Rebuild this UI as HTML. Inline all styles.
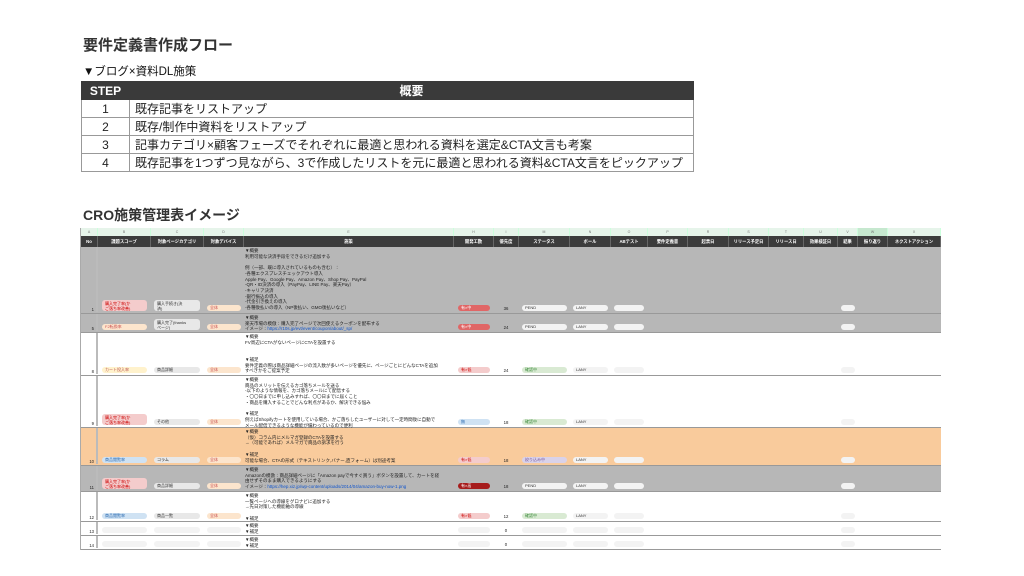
<!DOCTYPE html>
<html><head><meta charset="utf-8"><style>
*{margin:0;padding:0;box-sizing:border-box}
body{width:1024px;height:576px;background:#fff;position:relative;overflow:hidden;font-family:"Liberation Sans","Noto Sans CJK JP",sans-serif;color:#222}
.a{position:absolute}
h1{position:absolute;left:83px;top:34px;font-size:15px;font-weight:bold;color:#333}
.sub{left:83px;top:63px;font-size:11.5px;color:#111}
table.st{position:absolute;left:81px;top:81px;width:613px;border-collapse:collapse;font-size:12px}
table.st td,table.st th{border:1px solid #999;height:18px;line-height:16px}
table.st th{background:#3a3a3a;color:#fff;font-weight:bold;border-color:#3a3a3a}
table.st td:first-child{text-align:center;width:48px}
table.st td:last-child{padding-left:5px}
.cro{left:83px;top:205px;font-size:14px;font-weight:bold;color:#333}
.sheet{left:80px;top:228px;width:860px;height:322px;border-left:1px solid #aaa}
.ch{position:absolute;top:0;height:8px;background:#e6f4ea;font-size:3.5px;color:#777;text-align:center;line-height:8px;border-right:1px solid #cfd;}
.hd{position:absolute;top:8px;height:11px;background:#3c3c3c;color:#fff;font-size:4.3px;font-weight:bold;text-align:center;line-height:11px;border-right:1px solid #666}
.row{position:absolute;left:0;width:860px;border-bottom:1px solid #999}
.g{background:#b7b7b7}.o{background:#f9cb9c}.w{background:#fff}
.num{position:absolute;left:0;width:17px;bottom:1px;font-size:4.2px;text-align:right;padding-right:2px;border-right:2px solid #bbb;top:0;display:flex;align-items:flex-end;justify-content:flex-end}
.t{position:absolute;left:164px;top:1px;font-size:4.5px;line-height:5.7px;width:210px;white-space:nowrap}
.p{position:absolute;height:6px;border-radius:3px;font-size:4px;line-height:6px;padding-left:3px;white-space:nowrap;overflow:hidden}
.p2{height:11px;line-height:5px;border-radius:3px;padding-top:0.5px}
.pk{background:#f4cccc;color:#c00}.gr{background:#e8e8e8;color:#333}.or{background:#fce5cd;color:#c55}
.rd{background:#e06666;color:#fff}.dr{background:#a61c1c;color:#fff}.lg{background:#d9ead3;color:#3a8a3a}.bl{background:#cfe2f3;color:#2a6ab0}
.pu{background:#d9d2e9;color:#7a5aa0}.ye{background:#fff2cc;color:#b55}.ws{background:#f3f3f3;color:#333}
.nm{position:absolute;font-size:4.3px;width:20px;text-align:center}
a{color:#1155cc}
.vl{position:absolute;top:19px;bottom:0;width:0;border-left:1px dashed #ddd}
</style></head><body>
<h1>要件定義書作成フロー</h1>
<div class="a sub">▼ブログ×資料DL施策</div>
<table class="st">
<tr><th style="width:48px">STEP</th><th>概要</th></tr>
<tr><td>1</td><td>既存記事をリストアップ</td></tr>
<tr><td>2</td><td>既存/制作中資料をリストアップ</td></tr>
<tr><td>3</td><td>記事カテゴリ×顧客フェーズでそれぞれに最適と思われる資料を選定&amp;CTA文言も考案</td></tr>
<tr><td>4</td><td>既存記事を1つずつ見ながら、3で作成したリストを元に最適と思われる資料&amp;CTA文言をピックアップ</td></tr>
</table>
<div class="a cro">CRO施策管理表イメージ</div>

<div class="a sheet">
<div class="ch" style="left:0;width:17px">A</div><div class="ch" style="left:17px;width:53px">B</div><div class="ch" style="left:70px;width:53px">C</div><div class="ch" style="left:123px;width:40px">D</div><div class="ch" style="left:163px;width:210px">E</div><div class="ch" style="left:373px;width:40px">H</div><div class="ch" style="left:413px;width:25px">I</div><div class="ch" style="left:438px;width:51px">M</div><div class="ch" style="left:489px;width:41px">N</div><div class="ch" style="left:530px;width:37px">O</div><div class="ch" style="left:567px;width:40px">P</div><div class="ch" style="left:607px;width:41px">R</div><div class="ch" style="left:648px;width:40px">S</div><div class="ch" style="left:688px;width:35px">T</div><div class="ch" style="left:723px;width:34px">U</div><div class="ch" style="left:757px;width:20px">V</div><div class="ch" style="left:777px;width:30px;background:#c6e8cf">W</div><div class="ch" style="left:807px;width:53px">X</div>
<div class="hd" style="left:0;width:17px">No</div><div class="hd" style="left:17px;width:53px">課題スコープ</div><div class="hd" style="left:70px;width:53px">対象ページカテゴリ</div><div class="hd" style="left:123px;width:40px">対象デバイス</div><div class="hd" style="left:163px;width:210px">施策</div><div class="hd" style="left:373px;width:40px">開発工数</div><div class="hd" style="left:413px;width:25px">優先度</div><div class="hd" style="left:438px;width:51px">ステータス</div><div class="hd" style="left:489px;width:41px">ボール</div><div class="hd" style="left:530px;width:37px">ABテスト</div><div class="hd" style="left:567px;width:40px">要件定義書</div><div class="hd" style="left:607px;width:41px">起票日</div><div class="hd" style="left:648px;width:40px">リリース予定日</div><div class="hd" style="left:688px;width:35px">リリース日</div><div class="hd" style="left:723px;width:34px">効果検証日</div><div class="hd" style="left:757px;width:20px">結果</div><div class="hd" style="left:777px;width:30px">振り返り</div><div class="hd" style="left:807px;width:53px">ネクストアクション</div>

<!-- row 1 -->
<div class="row g" style="top:19px;height:67px"><div class="num">1</div>
<div class="t">▼概要<br>利用可能な決済手段をできるだけ追加する<br><br>例（一部、既に導入されているものも含む）：<br>-各種エクスプレスチェックアウト導入<br>Apple Pay、Google Pay、Amazon Pay、Shop Pay、PayPal<br>-QR・ID決済の導入（PayPay、LINE Pay、楽天Pay）<br>-キャリア決済<br>-銀行振込の導入<br>-代金引き換えの導入<br>-各種後払いの導入（NP後払い、GMO後払いなど）</div>
<div class="p p2 pk" style="left:21px;bottom:2px;width:45px">購入完了率(か<br>ご落ち率改善)</div><div class="p p2 gr" style="left:73px;bottom:2px;width:46px">購入手続き(決<br>済)</div><div class="p or" style="left:126px;bottom:2px;width:34px">全体</div>
<div class="p rd" style="left:377px;bottom:2px;width:32px">有×中</div><div class="nm" style="left:415px;bottom:2px">36</div><div class="p ws" style="left:441px;bottom:2px;width:45px">PEND</div><div class="p ws" style="left:492px;bottom:2px;width:35px">LANY</div><div class="p ws" style="left:533px;bottom:2px;width:30px"></div><div class="p ws" style="left:760px;bottom:2px;width:14px"></div></div>
<!-- row 5 -->
<div class="row g" style="top:86px;height:19px"><div class="num">5</div>
<div class="t">▼概要<br>楽天市場の模倣：購入完了ページで次回使えるクーポンを配布する<br>イメージ：<a>https://r10s.jp/evt/event/coupon/about/_sp/</a></div>
<div class="p or" style="left:21px;bottom:2px;width:45px">F2転換率</div><div class="p p2 gr" style="left:73px;bottom:2px;width:46px">購入完了(thanks<br>ページ)</div><div class="p or" style="left:126px;bottom:2px;width:34px">全体</div>
<div class="p rd" style="left:377px;bottom:2px;width:32px">有×中</div><div class="nm" style="left:415px;bottom:2px">24</div><div class="p ws" style="left:441px;bottom:2px;width:45px">PEND</div><div class="p ws" style="left:492px;bottom:2px;width:35px">LANY</div><div class="p ws" style="left:533px;bottom:2px;width:30px"></div><div class="p ws" style="left:760px;bottom:2px;width:14px"></div></div>
<!-- row 8 -->
<div class="row w" style="top:105px;height:43px"><div class="num">8</div>
<div class="t">▼概要<br>FV周辺にCTAがないページにCTAを設置する<br><br><br>▼補足<br>要件定義の際は商品詳細ページの流入数が多いページを優先に、ページごとにどんなCTAを追加<br>すべきかをご提案予定</div>
<div class="p ye" style="left:21px;bottom:2px;width:45px">カート投入率</div><div class="p gr" style="left:73px;bottom:2px;width:46px">商品詳細</div><div class="p or" style="left:126px;bottom:2px;width:34px">全体</div>
<div class="p pk" style="left:377px;bottom:2px;width:32px">有×低</div><div class="nm" style="left:415px;bottom:2px">24</div><div class="p lg" style="left:441px;bottom:2px;width:45px">確認中</div><div class="p ws" style="left:492px;bottom:2px;width:35px">LANY</div><div class="p ws" style="left:533px;bottom:2px;width:30px"></div><div class="p ws" style="left:760px;bottom:2px;width:14px"></div></div>
<!-- row 9 -->
<div class="row w" style="top:148px;height:52px"><div class="num">9</div>
<div class="t">▼概要<br>商品のメリットを伝えるカゴ落ちメールを送る<br>-以下のような情報を、カゴ落ちメールにて配信する<br>・〇〇日までに申し込みすれば、〇〇日までに届くこと<br>・商品を購入することでどんな利点があるか、解決できる悩み<br><br>▼補足<br>例えばShopifyカートを使用している場合、かご落ちしたユーザーに対して一定時間後に自動で<br>メール配信できるような機能が備わっているので便利</div>
<div class="p p2 pk" style="left:21px;bottom:2px;width:45px">購入完了率(か<br>ご落ち率改善)</div><div class="p gr" style="left:73px;bottom:2px;width:46px">その他</div><div class="p or" style="left:126px;bottom:2px;width:34px">全体</div>
<div class="p bl" style="left:377px;bottom:2px;width:32px">無</div><div class="nm" style="left:415px;bottom:2px">18</div><div class="p lg" style="left:441px;bottom:2px;width:45px">確認中</div><div class="p ws" style="left:492px;bottom:2px;width:35px">LANY</div><div class="p ws" style="left:533px;bottom:2px;width:30px"></div><div class="p ws" style="left:760px;bottom:2px;width:14px"></div></div>
<!-- row 10 -->
<div class="row o" style="top:200px;height:38px"><div class="num">10</div>
<div class="t">▼概要<br>（仮）コラム内にメルマガ登録のCTAを設置する<br>→（可能であれば）メルマガで商品の訴求を行う<br><br>▼補足<br>可能な場合、CTAの形式（テキストリンク,バナー,直フォーム）は別途考案</div>
<div class="p bl" style="left:21px;bottom:2px;width:45px">商品閲覧率</div><div class="p gr" style="left:73px;bottom:2px;width:46px">コラム</div><div class="p or" style="left:126px;bottom:2px;width:34px">全体</div>
<div class="p pk" style="left:377px;bottom:2px;width:32px">有×低</div><div class="nm" style="left:415px;bottom:2px">18</div><div class="p pu" style="left:441px;bottom:2px;width:45px">絞り込み中</div><div class="p ws" style="left:492px;bottom:2px;width:35px">LANY</div><div class="p ws" style="left:533px;bottom:2px;width:30px"></div><div class="p ws" style="left:760px;bottom:2px;width:14px"></div></div>
<!-- row 11 -->
<div class="row g" style="top:238px;height:26px"><div class="num">11</div>
<div class="t">▼概要<br>Amazonの模倣：商品詳細ページに「Amazon payで今すぐ買う」ボタンを設置して、カートを経<br>由せずそのまま購入できるようにする<br>イメージ：<a>https://hep.xiz.jp/wp-content/uploads/2014/04/amazon-buy-now-1.png</a></div>
<div class="p p2 pk" style="left:21px;bottom:2px;width:45px">購入完了率(か<br>ご落ち率改善)</div><div class="p gr" style="left:73px;bottom:2px;width:46px">商品詳細</div><div class="p or" style="left:126px;bottom:2px;width:34px">全体</div>
<div class="p dr" style="left:377px;bottom:2px;width:32px">有×高</div><div class="nm" style="left:415px;bottom:2px">18</div><div class="p ws" style="left:441px;bottom:2px;width:45px">PEND</div><div class="p ws" style="left:492px;bottom:2px;width:35px">LANY</div><div class="p ws" style="left:533px;bottom:2px;width:30px"></div><div class="p ws" style="left:760px;bottom:2px;width:14px"></div></div>
<!-- row 12 -->
<div class="row w" style="top:264px;height:30px"><div class="num">12</div>
<div class="t">▼概要<br>一覧ページへの導線をグロナビに追加する<br>→先日対策した機能軸の導線<br><br>▼補足</div>
<div class="p bl" style="left:21px;bottom:2px;width:45px">商品閲覧率</div><div class="p gr" style="left:73px;bottom:2px;width:46px">商品一覧</div><div class="p or" style="left:126px;bottom:2px;width:34px">全体</div>
<div class="p pk" style="left:377px;bottom:2px;width:32px">有×低</div><div class="nm" style="left:415px;bottom:2px">12</div><div class="p lg" style="left:441px;bottom:2px;width:45px">確認中</div><div class="p ws" style="left:492px;bottom:2px;width:35px">LANY</div><div class="p ws" style="left:533px;bottom:2px;width:30px"></div><div class="p ws" style="left:760px;bottom:2px;width:14px"></div></div>
<!-- row 13 -->
<div class="row w" style="top:294px;height:14px"><div class="num">13</div>
<div class="t">▼概要<br>▼補足</div>
<div class="p ws" style="left:21px;bottom:2px;width:45px"></div><div class="p ws" style="left:73px;bottom:2px;width:46px"></div><div class="p ws" style="left:126px;bottom:2px;width:34px"></div>
<div class="p ws" style="left:377px;bottom:2px;width:32px"></div><div class="nm" style="left:415px;bottom:2px">0</div><div class="p ws" style="left:441px;bottom:2px;width:45px"></div><div class="p ws" style="left:492px;bottom:2px;width:35px"></div><div class="p ws" style="left:533px;bottom:2px;width:30px"></div><div class="p ws" style="left:760px;bottom:2px;width:14px"></div></div>
<!-- row 14 -->
<div class="row w" style="top:308px;height:14px"><div class="num">14</div>
<div class="t">▼概要<br>▼補足</div>
<div class="p ws" style="left:21px;bottom:2px;width:45px"></div><div class="p ws" style="left:73px;bottom:2px;width:46px"></div><div class="p ws" style="left:126px;bottom:2px;width:34px"></div>
<div class="p ws" style="left:377px;bottom:2px;width:32px"></div><div class="nm" style="left:415px;bottom:2px">0</div><div class="p ws" style="left:441px;bottom:2px;width:45px"></div><div class="p ws" style="left:492px;bottom:2px;width:35px"></div><div class="p ws" style="left:533px;bottom:2px;width:30px"></div><div class="p ws" style="left:760px;bottom:2px;width:14px"></div></div>
</div>
</body></html>
